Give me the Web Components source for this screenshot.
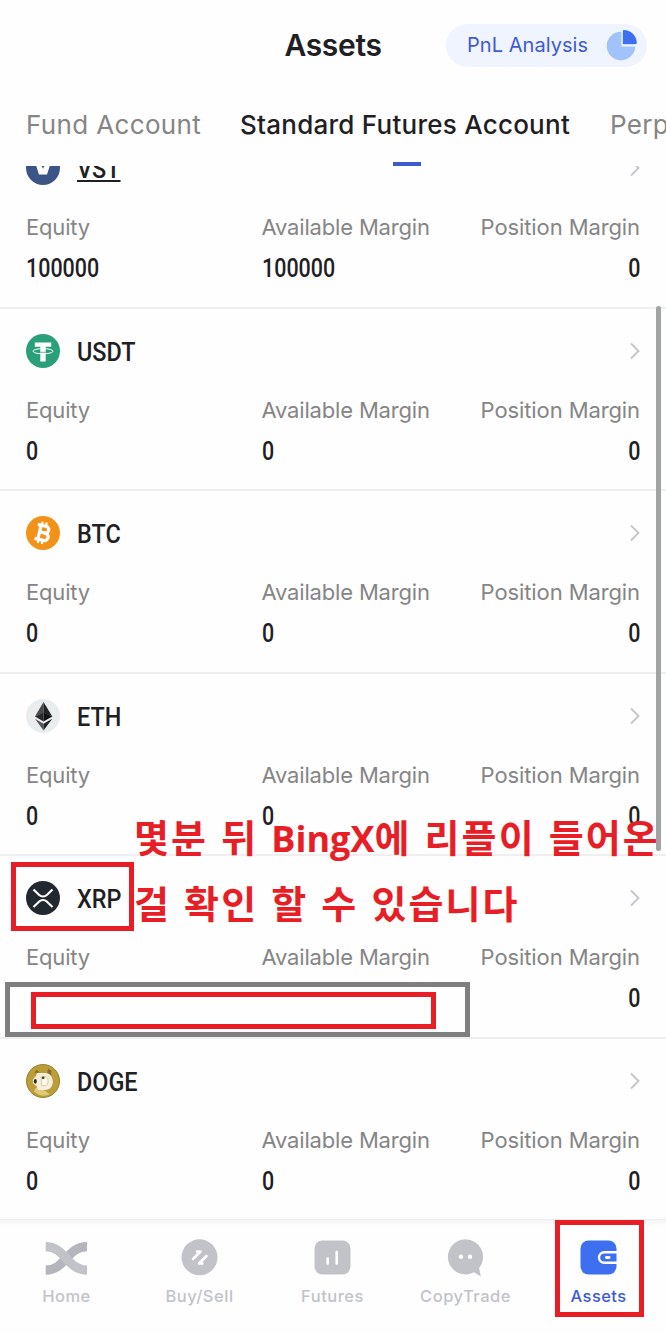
<!DOCTYPE html>
<html lang="en">
<head>
<meta charset="utf-8">
<title>Assets</title>
<style>
  html, body { margin: 0; padding: 0; }
  body { width: 666px; height: 1333px; overflow: hidden; background: #fefefe; font-family: Inter, "Liberation Sans", sans-serif; color: #1f2023; }
</style>
</head>
<body>
<assets-page></assets-page>

<script>
const COIN_ICONS = {
  VST: `<circle cx="17" cy="17" r="17" fill="#3c5488"/><path d="M8 8h5l4 8 4-8h5l-5 15.500h-8z" fill="#fff"/><path d="M15 13.500h4L17 17.800z" fill="#3c5488"/>`,
  USDT: `<circle cx="17" cy="17" r="17" fill="#29a07a"/><path d="M8.800 8.500h16.400v4.300h-5.500v14.700h-5.400V12.800H8.800z" fill="#fff"/><ellipse cx="17" cy="17.200" rx="10" ry="2.600" fill="none" stroke="#fff" stroke-width="1"/><path d="M14.300 18.300h5.400" stroke="#29a07a" stroke-width=".7"/>`,
  BTC: `<circle cx="17" cy="17" r="17" fill="#f39219"/><g transform="rotate(13 17 17)" fill="none" stroke="#fff"><path d="M13.400 9.800v14.400M10 9.800h8.200c5 0 5 6.700 0 6.700h-4.600M13.600 16.700h5.500c5.200 0 5.200 7.400 0 7.400H10" stroke-width="3.200"/><path d="M14.200 6v4M18.300 6v4M14.200 24v4M18.300 24v4" stroke-width="2.200"/></g>`,
  ETH: `<circle cx="17" cy="17" r="17" fill="#eaedef"/><path d="M17.500 3v10.800L9 17.500z" fill="#4a4a4a"/><path d="M17.500 3v10.800l8.800 3.700z" fill="#222"/><path d="M17.500 13.600v9L9 17.500z" fill="#292929"/><path d="M17.500 13.600v9l8.800-5.100z" fill="#111"/><path d="M9 19.700l8.500 5v6.800z" fill="#555"/><path d="M26.300 19.700l-8.800 5v6.800z" fill="#222"/>`,
  XRP: `<circle cx="17" cy="17" r="17" fill="#22282f"/><path d="M7.500 8.500l5.700 5.500c2.200 2 5.400 2 7.600 0l5.700-5.500M7.500 26l5.700-5.500c2.200-2 5.400-2 7.600 0l5.700 5.500" fill="none" stroke="#fff" stroke-width="2.200"/>`,
  DOGE: `<circle cx="17" cy="17" r="16.500" fill="#bd9d36" stroke="#97803a"/><path d="M22 4.500l3.300 2.200v5l-4-3zM8.500 9l2-3.500 3 3z" fill="#8a6a2b"/><path d="M8 27c2-5 5-4 8-2l8 5c-5 3-12 2-16-3z" fill="#e0c877"/><path d="M11 9h8c10 0 11 17 0 17h-7c-1-3-1-4-3-5-4-2-2-7 1-9z" fill="#f5efdd"/><path d="M15.400 12.700h3.400c4.400 0 4.400 9 0 9h-3.400z" fill="#fffaf0" stroke="#ddcc94" stroke-width="1"/><ellipse cx="9.300" cy="17.300" rx="1.500" ry="2.400" fill="#302b22"/><circle cx="17.200" cy="13.800" r="1.400" fill="#4b432f"/>`
};

const NAV_ICONS = {
  home: `<path d="M2.700 32.100C22.500 32.100 24 8.600 44 8.600" fill="none" stroke="#b5b6bd" stroke-width="9.200"/><path d="M2.700 8.600C22.500 8.600 24 32.100 44 32.100" fill="none" stroke="#c2c3c9" stroke-width="9.200"/>`,
  trade: `<circle cx="23.500" cy="19.300" r="18" fill="#c2c3c9"/><g fill="none" stroke="#fff" stroke-width="2.500" stroke-linecap="round" stroke-linejoin="round"><path d="M17 21l7.500-7.500h-3.500M30.500 18L23 25.500h3.500"/></g>`,
  chart: `<rect x="5.500" y="2.500" width="36" height="34" rx="8" fill="#c2c3c9"/><path d="M18.700 20.500v5M27.700 14v11.500" stroke="#fff" stroke-width="2.600" stroke-linecap="round"/>`,
  copy: `<path d="M23.500 1.200a17.600 17.600 0 1 0 8.500 33l6.800 4.300-1.700-8.500A17.600 17.600 0 0 0 23.500 1.200z" fill="#c2c3c9"/><circle cx="19" cy="18.700" r="2.200" fill="#fff"/><circle cx="28" cy="18.700" r="2.200" fill="#fff"/>`,
  wallet: `<rect x="5.500" y="2.500" width="36" height="34" rx="8" fill="#3e6ff0"/><path d="M42 14.200H29.300a5.300 5.300 0 0 0 0 10.600H42" fill="none" stroke="#fff" stroke-width="2.400"/><rect x="30" y="18.100" width="5.500" height="2.800" rx="1.400" fill="#fff"/>`
};

class PageHeader extends HTMLElement {
  constructor() {
    super();
    this.attachShadow({ mode: 'open' });
    this.shadowRoot.innerHTML = `
      <style>
        :host { display: grid; grid-template-columns: 1fr auto 1fr; align-items: center; height: 90px; padding: 0 19px; box-sizing: border-box; }
        h1 { grid-column: 2; margin: 0; font-size: 30px; font-weight: 600; line-height: 40px; letter-spacing: -0.35px; }
        .pill { justify-self: end; display: flex; align-items: center; justify-content: space-between; box-sizing: border-box; width: 201px; height: 43px; padding: 0 9px 0 21px; border-radius: 22px; background: #f0f4fe; color: #3e5bd2; font-size: 20px; white-space: nowrap; }
        .pill span { letter-spacing: 0.05px; }
        svg { display: block; width: 32px; height: 32px; }
      </style>
      <h1><slot></slot></h1>
      <div class="pill"><span>PnL Analysis</span>
        <svg viewBox="0 0 32 32"><circle cx="15" cy="17" r="14.300" fill="#9fc3fa"/><path d="M15.300 1h2v14.500H32v2H15.300z" fill="#f0f4fe"/><path d="M16.800 2a1 1 0 0 1 1-1c7 0 13 5.700 13 13a1 1 0 0 1-1 1H16.800z" fill="#3e6ff0"/></svg>
      </div>
    `;
  }
}

class AccountTabs extends HTMLElement {
  constructor() {
    super();
    this.attachShadow({ mode: 'open' });
    this.shadowRoot.innerHTML = `
      <style>
        :host { display: flex; gap: 39px; height: 76px; padding-left: 26px; box-sizing: border-box; white-space: nowrap; overflow: hidden; font-size: 26px; line-height: 36px; color: #858585; }
        div { flex: none; padding-top: 17px; letter-spacing: 0.35px; }
        .fund { width: 175px; }
        .active { width: 331px; color: #1f2023; font-weight: 500; letter-spacing: 0.25px; }
        .active::after { content: ''; display: block; width: 28px; height: 4px; margin: 19px auto 0; background: #3e5bd2; transform: translateX(1px); }
      </style>
      <div class="fund">Fund Account</div>
      <div class="active">Standard Futures Account</div>
      <div>Perp</div>
    `;
  }
}

class CoinRow extends HTMLElement {
  constructor() {
    super();
    this.attachShadow({ mode: 'open' });
  }

  connectedCallback() {
    const symbol = this.getAttribute('symbol');
    const amount = this.getAttribute('amount') || '';
    this.shadowRoot.innerHTML = `
      <style>
        :host { display: block; flex: none; height: 182.5px; box-sizing: border-box; padding: 24.3px 26px 0; border-bottom: 2px solid #efeff0; }
        .head { display: flex; align-items: center; height: 36px; }
        .coin { width: 34px; height: 34px; margin-right: 17px; }
        .name, .value { font-family: Roboto, sans-serif; font-size: 26px; font-weight: 500; line-height: 30px; }
        .name { padding-top: 2px; transform: scaleX(0.9); transform-origin: left; }
        .name.link { text-decoration: underline; text-decoration-thickness: 1.5px; text-underline-offset: 2px; }
        .chevron { width: 10px; height: 18px; margin-left: auto; }
        .figures { display: grid; grid-template-columns: 235.5px 1fr auto; padding-top: 26px; }
        .label { color: #858585; font-size: 22px; line-height: 30px; letter-spacing: -0.17px; white-space: nowrap; }
        .value { height: 30px; margin-top: 11px; transform: scaleX(0.825); transform-origin: left; }
        .figures > :last-child .label { letter-spacing: -0.1px; }
        .figures > :last-child .value { text-align: right; transform-origin: right; }
      </style>
      <div class="head">
        <svg class="coin" viewBox="0 0 34 34">${COIN_ICONS[symbol]}</svg>
        <span class="name ${this.hasAttribute('link') ? 'link' : ''}">${symbol}</span>
        <svg class="chevron" viewBox="0 0 10 18"><path d="M1 1.500L8.500 9 1 16.500" fill="none" stroke="#c4c5ca" stroke-width="1.800"/></svg>
      </div>
      <div class="figures">
        <div><div class="label">Equity</div><div class="value">${amount}</div></div>
        <div><div class="label">Available Margin</div><div class="value">${amount}</div></div>
        <div><div class="label">Position Margin</div><div class="value">0</div></div>
      </div>
    `;
  }
}

class NavItem extends HTMLElement {
  constructor() {
    super();
    this.attachShadow({ mode: 'open' });
  }

  connectedCallback() {
    this.shadowRoot.innerHTML = `
      <style>
        :host { display: flex; flex-direction: column; align-items: center; gap: 8px; color: #c2c3c9; font-size: 16.5px; font-weight: 500; line-height: 22px; letter-spacing: 0.5px; }
        :host([active]) { color: #3e5bd2; font-weight: 550; letter-spacing: 0.4px; }
        svg { width: 47px; height: 39px; }
      </style>
      <svg viewBox="0 0 47 39">${NAV_ICONS[this.getAttribute('icon')]}</svg>
      <span><slot></slot></span>
    `;
  }
}

class BottomNav extends HTMLElement {
  constructor() {
    super();
    this.attachShadow({ mode: 'open' });
    this.shadowRoot.innerHTML = `
      <style>
        :host { display: grid; grid-template-columns: repeat(5, 1fr); height: 113px; padding: 18px 1px 0 0; box-sizing: border-box; background: linear-gradient(#f5f5f5, #fefefe 6px); }
      </style>
      <slot></slot>
    `;
  }
}

// Outlined callout; position and size come from the host's style
class MarkBox extends HTMLElement {
  constructor() {
    super();
    this.attachShadow({ mode: 'open' });
    this.shadowRoot.innerHTML = `
      <style>
        :host { display: block; position: absolute; box-sizing: border-box; border: 5px solid var(--mark, #e81e26); background: var(--fill, transparent); }
      </style>
    `;
  }
}

class MarkNote extends HTMLElement {
  constructor() {
    super();
    this.attachShadow({ mode: 'open' });
    this.shadowRoot.innerHTML = `
      <style>
        :host { display: block; position: absolute; left: 134px; top: 803px; color: #e81e26; font-family: "Noto Sans CJK KR", sans-serif; font-size: 38px; font-weight: 700; line-height: 66px; white-space: nowrap; }
        div { height: 66px; letter-spacing: 2.1px; word-spacing: 2.3px; }
        .latin { font-family: "Open Sans", sans-serif; font-size: 36px; line-height: 1; letter-spacing: 0; }
      </style>
      <div>몇분 뒤 <span class="latin">BingX</span>에 리플이 들어온</div>
      <div>걸 확인 할 수 있습니다</div>
    `;
  }
}

class AssetsPage extends HTMLElement {
  constructor() {
    super();
    this.attachShadow({ mode: 'open' });
    this.shadowRoot.innerHTML = `
      <style>
        :host { display: flex; flex-direction: column; position: relative; width: 666px; height: 1333px; overflow: hidden; }
        .list { flex: 1; min-height: 0; display: flex; flex-direction: column; overflow: hidden; }
        .list > :first-child { margin-top: -40px; }
        .scrollbar { position: absolute; right: 5px; top: 306px; width: 5px; height: 545px; border-radius: 3px; background: #a2a3a3; }
        .hidden-amounts { left: 5px; top: 982px; width: 465px; height: 55px; --mark: #7f7f7f; --fill: #fefefe; }
        .amounts { left: 31px; top: 992px; width: 405px; height: 37px; }
        .coin { left: 11px; top: 862px; width: 123px; height: 69px; }
        .tab { left: 555px; top: 1220px; width: 89px; height: 97px; }
      </style>
      <page-header>Assets</page-header>
      <account-tabs></account-tabs>
      <div class="list">
        <coin-row symbol="VST" amount="100000" link></coin-row>
        <coin-row symbol="USDT" amount="0"></coin-row>
        <coin-row symbol="BTC" amount="0"></coin-row>
        <coin-row symbol="ETH" amount="0"></coin-row>
        <coin-row symbol="XRP"></coin-row>
        <coin-row symbol="DOGE" amount="0"></coin-row>
      </div>
      <bottom-nav>
        <nav-item icon="home">Home</nav-item>
        <nav-item icon="trade">Buy/Sell</nav-item>
        <nav-item icon="chart">Futures</nav-item>
        <nav-item icon="copy">CopyTrade</nav-item>
        <nav-item icon="wallet" active>Assets</nav-item>
      </bottom-nav>
      <div class="scrollbar"></div>
      <mark-box class="hidden-amounts"></mark-box>
      <mark-box class="amounts"></mark-box>
      <mark-box class="coin"></mark-box>
      <mark-box class="tab"></mark-box>
      <mark-note></mark-note>
    `;
  }
}

customElements.define('page-header', PageHeader);
customElements.define('account-tabs', AccountTabs);
customElements.define('coin-row', CoinRow);
customElements.define('nav-item', NavItem);
customElements.define('bottom-nav', BottomNav);
customElements.define('mark-box', MarkBox);
customElements.define('mark-note', MarkNote);
customElements.define('assets-page', AssetsPage);
</script>
</body>
</html>
